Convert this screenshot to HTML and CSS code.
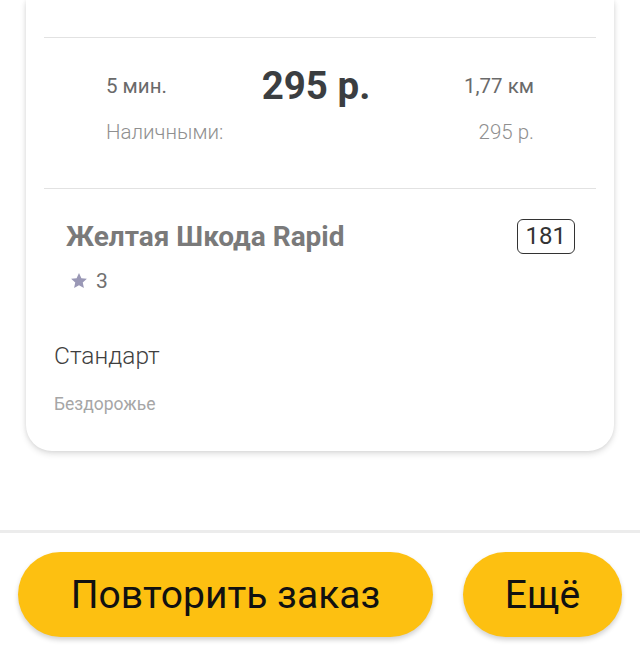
FILE: index.html
```html
<!DOCTYPE html>
<html lang="ru">
<head>
<meta charset="utf-8">
<link rel="stylesheet" href="styles.css">
</head>
<body>
<div class="screen">
  <main class="content">
    <section class="card">
      <div class="card-top"></div>
      <div class="stats">
        <div class="stats-grid">
          <span class="stat-small">5 мин.</span>
          <span class="stat-price">295 р.</span>
          <span class="stat-small right">1,77 км</span>
          <span class="stat-sub">Наличными:</span>
          <span></span>
          <span class="stat-sub right">295 р.</span>
        </div>
      </div>
      <div class="car">
        <div class="car-head">
          <span class="car-name">Желтая Шкода Rapid</span>
          <span class="car-num">181</span>
        </div>
        <div class="rating">
          <svg class="star" viewBox="0 0 24 24" width="20" height="20"><path d="M12 2.5l2.9 6.2 6.6.7-5 4.5 1.4 6.6L12 17.2l-5.9 3.3 1.4-6.6-5-4.5 6.6-.7z" fill="#9a98b6"/></svg>
          <span class="rating-val">3</span>
        </div>
      </div>
      <div class="tariff">
        <div class="tariff-name">Стандарт</div>
        <div class="tariff-opt">Бездорожье</div>
      </div>
    </section>
  </main>
  <footer class="actions">
    <button class="btn btn-main">Повторить заказ</button>
    <button class="btn btn-more">Ещё</button>
  </footer>
</div>
</body>
</html>
```

FILE: styles.css
```css
* { box-sizing: border-box; }
html, body { margin: 0; padding: 0; }
body {
  background: #fff;
  font-family: Roboto, "Noto Sans", sans-serif;
  width: 640px;
  height: 656px;
  overflow: hidden;
}
.screen {
  display: flex;
  flex-direction: column;
  height: 656px;
}
.content {
  flex: 1;
  overflow: hidden;
}
.card {
  margin: 0 26px;
  background: #fff;
  border-radius: 0 0 26px 26px;
  box-shadow: 0 3px 6px rgba(0,0,0,0.12), 0 0 4px rgba(0,0,0,0.08);
  padding: 0 18px 37px;
}
.card-top {
  height: 38px;
  border-bottom: 1px solid #e2e2e2;
}
.stats {
  height: 151px;
  border-bottom: 1px solid #e2e2e2;
  padding: 26px 62px 0;
}
.stats-grid {
  display: grid;
  grid-template-columns: 1fr auto 1fr;
  grid-template-rows: 44px 30px;
  row-gap: 9px;
  align-items: center;
}
.right { text-align: right; }
.stat-small {
  font-size: 20.5px;
  color: #6a6a6a;
  font-weight: 400;
  line-height: 24px;
}
.stat-price {
  font-size: 38.5px;
  font-weight: 700;
  color: #3b3e41;
  line-height: 44px;
  padding-right: 8px;
}
.stat-sub {
  font-size: 20.5px;
  font-weight: 300;
  color: #8f8f8f;
  line-height: 24px;
}
.car {
  padding: 30px 21px 0 22px;
  height: 152px;
}
.car-head {
  display: flex;
  justify-content: space-between;
  align-items: center;
}
.car-name {
  font-size: 28px;
  font-weight: 700;
  color: #7a7a7a;
  line-height: 34px;
}
.car-num {
  border: 1.5px solid #333;
  border-radius: 6px;
  font-size: 24px;
  color: #333;
  padding: 2px 8px;
  line-height: 29px;
}
.rating {
  display: flex;
  align-items: center;
  gap: 7px;
  margin-top: 14px;
  padding-left: 3px;
  height: 25px;
}
.rating-val {
  font-size: 21px;
  color: #707070;
}
.tariff {
  padding-left: 10px;
}
.tariff-name {
  font-size: 24.5px;
  font-weight: 300;
  color: #3f3f3f;
  line-height: 30px;
}
.tariff-opt {
  margin-top: 23px;
  font-size: 17.5px;
  color: #a6a6a6;
  line-height: 20px;
}
.actions {
  height: 126px;
  display: flex;
  gap: 30px;
  padding: 19px 18px 19px;
  border-top: 3px solid #ececec;
}
.btn {
  border: none;
  border-radius: 43px;
  background: #fdc011;
  color: #111;
  font-family: Roboto, "Noto Sans", sans-serif;
  font-size: 39px;
  height: 85px;
  box-shadow: 0 3px 5px rgba(0,0,0,0.18);
}
.btn-main { flex: 1; }
.btn-more { width: 159px; flex: none; }
```
